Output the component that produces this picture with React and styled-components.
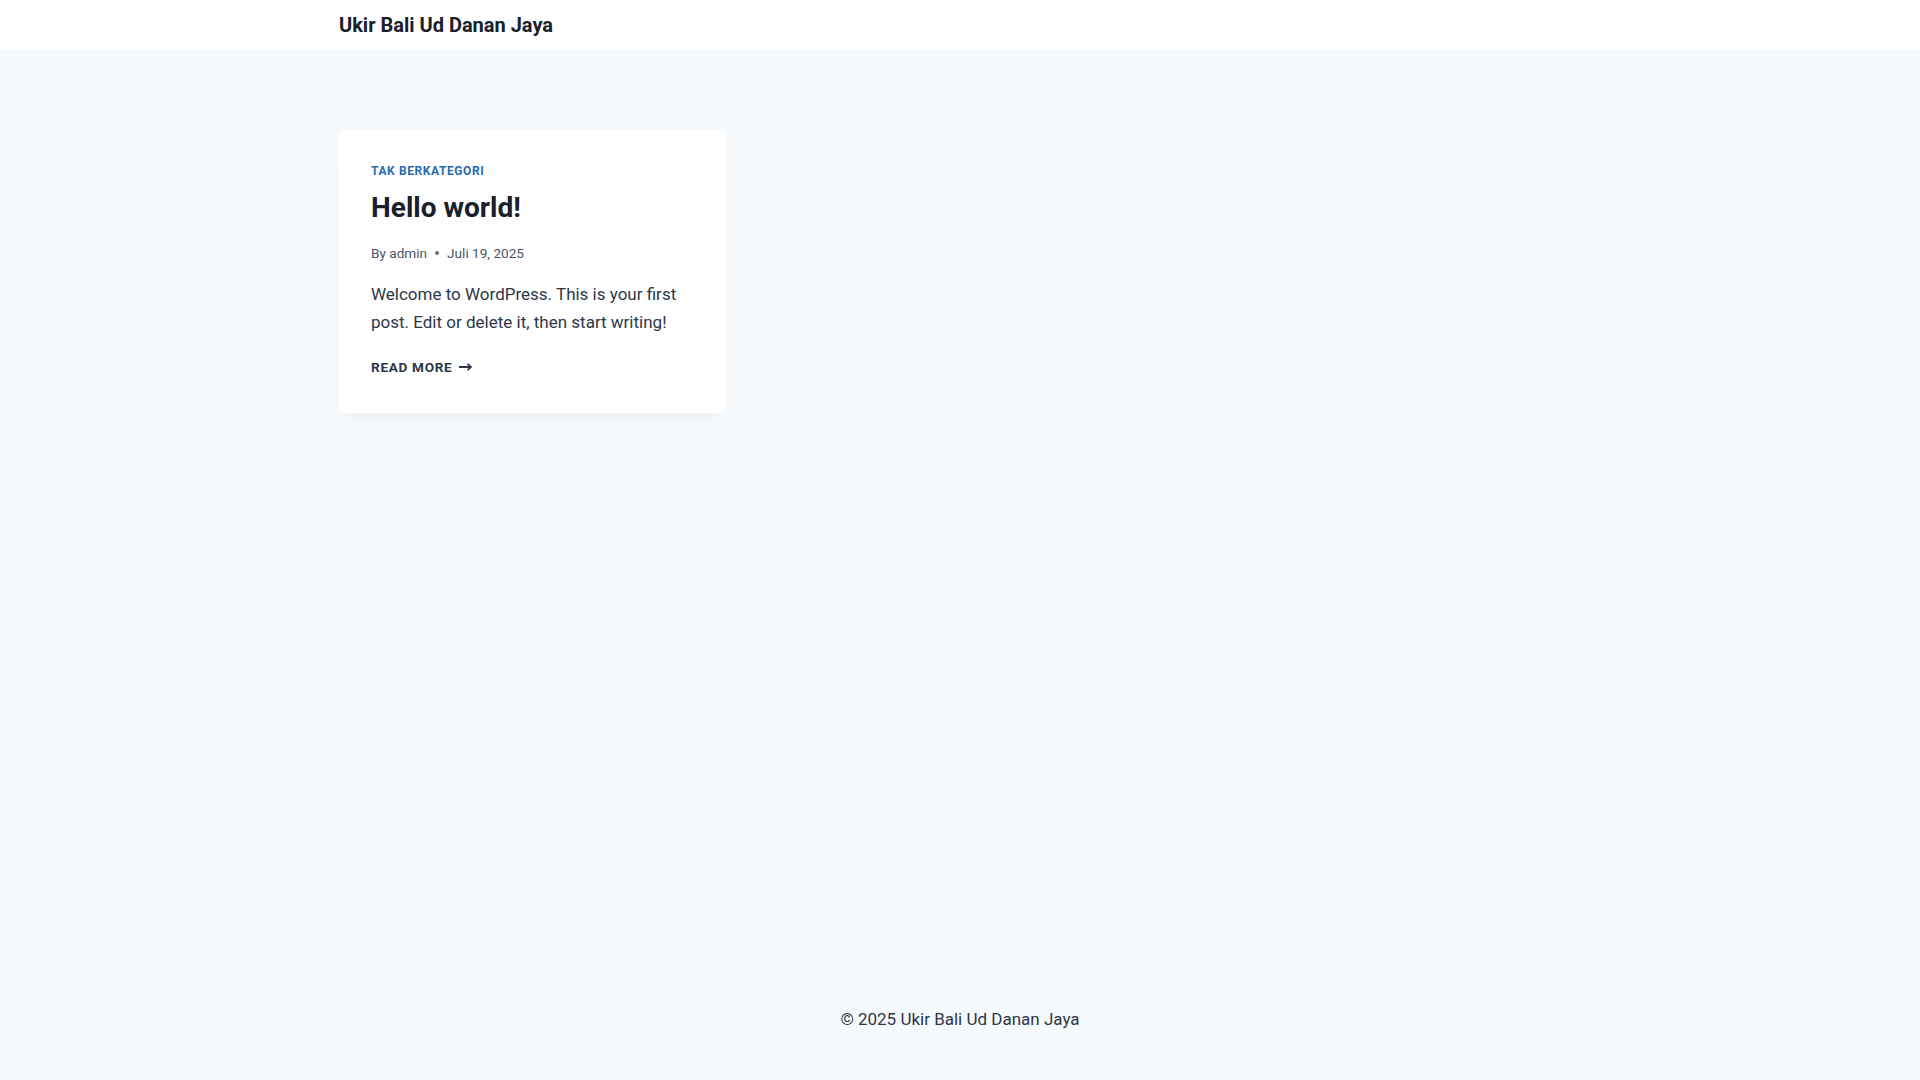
import React from "react";
import styled, { createGlobalStyle } from "styled-components";

const GlobalStyle = createGlobalStyle`
  html, body {
    margin: 0;
    padding: 0;
  }
  body {
    background: #f7fafc;
    color: #2d3748;
    font-family: Roboto, "Liberation Sans", sans-serif;
    font-size: 17px;
    line-height: 1.6;
  }
  * {
    box-sizing: border-box;
  }
`;

const Page = styled.div`
  min-height: 100vh;
  display: flex;
  flex-direction: column;
`;

const Header = styled.header`
  background: #ffffff;
  height: 50px;
  padding-top: 4px;
  display: flex;
  align-items: center;
`;

const Container = styled.div`
  width: 100%;
  max-width: 1290px;
  margin: 0 auto;
  padding: 0 24px;
`;

const SiteTitle = styled.a`
  font-size: 20px;
  font-weight: 700;
  line-height: 1.2;
  color: #1a202c;
  text-decoration: none;
`;

const Main = styled.main`
  flex: 1;
  padding-top: 80px;
`;

const Grid = styled.div`
  display: grid;
  grid-template-columns: repeat(3, 1fr);
  gap: 40px;
`;

const Card = styled.article`
  background: #ffffff;
  border-radius: 4px;
  box-shadow: 0px 15px 15px -10px rgba(0, 0, 0, 0.05);
  padding: 32px 32px 33px;
`;

const Category = styled.a`
  display: block;
  font-size: 12px;
  line-height: 18px;
  font-weight: 700;
  letter-spacing: 0.05em;
  text-transform: uppercase;
  color: #2b6cb0;
  text-decoration: none;
`;

const Title = styled.h2`
  margin: 7px 0 0;
  font-size: 28px;
  line-height: 42px;
  font-weight: 700;
  color: #1a202c;
`;

const Meta = styled.div`
  margin-top: 13px;
  display: flex;
  align-items: center;
  font-size: 13.6px;
  line-height: 22px;
  color: #4a5568;
`;

const Dot = styled.span`
  width: 4px;
  height: 4px;
  border-radius: 50%;
  background: #4a5568;
  margin: 0 8px;
  opacity: 0.85;
`;

const Excerpt = styled.p`
  margin: 16px 0 0;
  font-size: 17px;
  line-height: 28px;
  color: #2d3748;
`;

const ReadMore = styled.a`
  margin-top: 20px;
  display: inline-flex;
  align-items: center;
  gap: 7px;
  font-size: 13.6px;
  line-height: 22px;
  font-weight: 700;
  letter-spacing: 0.05em;
  text-transform: uppercase;
  color: #2d3748;
  text-decoration: none;
`;

const Footer = styled.footer`
  padding: 27px 0 47px;
  text-align: center;
  font-size: 17px;
  line-height: 27px;
  color: #2d3748;
`;

const Arrow = () => (
  <svg width="13" height="8" viewBox="0 0 13 8" fill="none">
    <path d="M0 4h11.5" stroke="#2d3748" strokeWidth="2" />
    <path d="M8.5 0.8L12 4l-3.5 3.2" stroke="#2d3748" strokeWidth="1.8" fill="none" />
  </svg>
);

export default function App() {
  return (
    <Page>
      <GlobalStyle />
      <Header>
        <Container>
          <SiteTitle href="#">Ukir Bali Ud Danan Jaya</SiteTitle>
        </Container>
      </Header>
      <Main>
        <Container>
          <Grid>
            <Card>
              <Category href="#">Tak Berkategori</Category>
              <Title>Hello world!</Title>
              <Meta>
                <span>By admin</span>
                <Dot />
                <span>Juli 19, 2025</span>
              </Meta>
              <Excerpt>
                Welcome to WordPress. This is your first post. Edit or delete it,
                then start writing!
              </Excerpt>
              <ReadMore href="#">
                Read More <Arrow />
              </ReadMore>
            </Card>
          </Grid>
        </Container>
      </Main>
      <Footer>© 2025 Ukir Bali Ud Danan Jaya</Footer>
    </Page>
  );
}
